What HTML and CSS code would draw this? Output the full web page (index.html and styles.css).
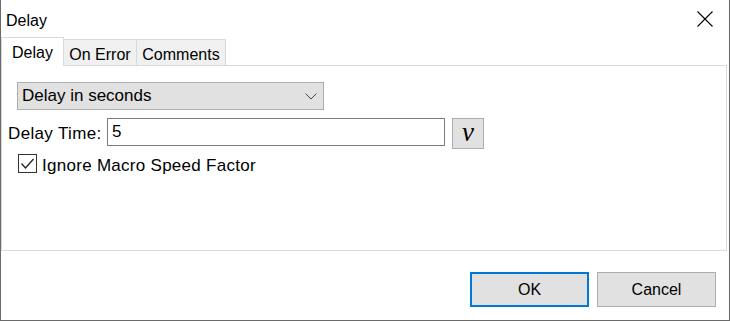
FILE: index.html
```html
<!DOCTYPE html>
<html lang="en">
<head>
    <title>Delay</title>
    <link rel="stylesheet" href="styles.css">
</head>
<body>
    <div class="window">
        <div class="titlebar">
            <span class="title">Delay</span>
            <svg class="close" width="16" height="16" viewBox="0 0 16 16">
                <path d="M0.5 0.5 L15.5 15.5 M15.5 0.5 L0.5 15.5" stroke="#000" stroke-width="1.1" fill="none"/>
            </svg>
        </div>

        <div class="tabs">
            <div class="tab active">Delay</div>
            <div class="tab tab-error">On Error</div>
            <div class="tab tab-comments">Comments</div>
        </div>

        <div class="panel">
            <div class="select">
                <span>Delay in seconds</span>
                <svg width="12" height="7" viewBox="0 0 12 7">
                    <polyline points="0.5,0.5 6,6 11.5,0.5" stroke="#444" stroke-width="1" fill="none"/>
                </svg>
            </div>

            <div class="field-row">
                <label class="field-label">Delay Time:</label>
                <div class="text-input">5</div>
                <div class="var-button">v</div>
            </div>

            <div class="check-row">
                <div class="checkbox">
                    <svg width="17" height="17" viewBox="0 0 17 17">
                        <polyline points="2.5,8.5 6.5,13 14.5,4" stroke="#222" stroke-width="1.3" fill="none"/>
                    </svg>
                </div>
                <span class="check-label">Ignore Macro Speed Factor</span>
            </div>
        </div>

        <div class="footer">
            <div class="button default">OK</div>
            <div class="button">Cancel</div>
        </div>
    </div>
</body>
</html>
```

FILE: styles.css
```css
body {
    margin: 0;
    padding: 0;
    background-color: #fff;
    font-family: "Liberation Sans", Arial, sans-serif;
    color: #000;
}

.window {
    width: 730px;
    height: 321px;
    box-sizing: border-box;
    border: 1px solid #6a6a6a;
    border-top: none;
    background-color: #fff;
    display: flex;
    flex-direction: column;
}

.titlebar {
    height: 37px;
    display: flex;
    align-items: flex-start;
    padding: 12px 16px 0 5px;
    box-sizing: border-box;
    font-size: 16px;
}

.title {
    line-height: 18px;
}

.close {
    margin-left: auto;
    margin-top: -1px;
}

.tabs {
    height: 28px;
    display: flex;
    align-items: flex-end;
    font-size: 16px;
}

.tab {
    box-sizing: border-box;
    height: 26px;
    padding-top: 6px;
    line-height: 18px;
    text-align: center;
    background-color: #f0f0f0;
    border: 1px solid #d9d9d9;
    border-bottom: none;
}

.tab.active {
    width: 63px;
    height: 29px;
    margin-bottom: -1px;
    background-color: #fff;
    position: relative;
    z-index: 1;
}

.tab-error {
    width: 73px;
    border-left: none;
}

.tab-comments {
    width: 89px;
    border-left: none;
}

.panel {
    height: 186px;
    box-sizing: border-box;
    margin-right: 2px;
    border: 1px solid #d9d9d9;
    font-size: 17px;
}

.select {
    width: 307px;
    height: 28px;
    box-sizing: border-box;
    margin: 16px 0 0 15px;
    padding: 0 6px 0 4px;
    display: flex;
    align-items: center;
    justify-content: space-between;
    background-color: #e1e1e1;
    border: 1px solid #adadad;
}

.field-row {
    display: flex;
    align-items: flex-start;
    margin-top: 8px;
    margin-left: 6px;
}

.field-label {
    width: 99px;
    height: 28px;
    line-height: 28px;
    padding-top: 2px;
    box-sizing: border-box;
    letter-spacing: 0.35px;
}

.text-input {
    width: 338px;
    height: 28px;
    box-sizing: border-box;
    border: 1px solid #7a7a7a;
    padding-left: 4px;
    line-height: 26px;
}

.var-button {
    width: 32px;
    height: 31px;
    box-sizing: border-box;
    margin-left: 7px;
    background-color: #e1e1e1;
    border: 1px solid #adadad;
    display: flex;
    align-items: center;
    justify-content: center;
    font-family: "Liberation Serif", "Times New Roman", serif;
    font-style: italic;
    font-size: 27px;
    padding-bottom: 3px;
}

.check-row {
    display: flex;
    align-items: flex-start;
    margin-top: 5px;
    margin-left: 16px;
}

.checkbox {
    width: 19px;
    height: 19px;
    box-sizing: border-box;
    border: 1px solid #333;
    background-color: #fff;
}

.checkbox svg {
    display: block;
}

.check-label {
    margin-left: 5px;
    padding-top: 2px;
    line-height: 19px;
    letter-spacing: 0.28px;
}

.footer {
    flex: 1;
    display: flex;
    justify-content: flex-end;
    align-items: flex-start;
    gap: 8px;
    padding: 21px 13px 0 0;
}

.button {
    width: 119px;
    height: 35px;
    box-sizing: border-box;
    background-color: #e1e1e1;
    border: 1px solid #adadad;
    font-size: 16px;
    display: flex;
    align-items: center;
    justify-content: center;
}

.button.default {
    border: 2px solid #0078d7;
}
```
